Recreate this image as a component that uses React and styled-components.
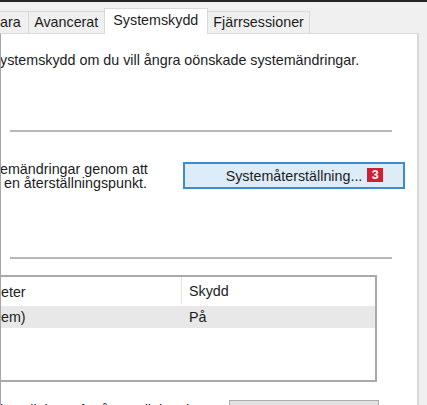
import React from "react";
import styled, { createGlobalStyle } from "styled-components";

const GlobalStyle = createGlobalStyle`
  html, body {
    margin: 0;
    padding: 0;
    background: #f0f0f0;
    overflow: hidden;
  }
  body {
    font-family: "Liberation Sans", Arial, sans-serif;
    font-size: 14.3px;
    color: #1c1c1c;
  }
`;

const tabs = [
  { label: "ara" },
  { label: "Avancerat" },
  { label: "Systemskydd", active: true },
  { label: "Fjärrsessioner" },
];

const App = () => {
  return (
    <>
      <GlobalStyle />
      <Window>
        <TabStrip>
          {tabs.map((t) => (
            <Tab key={t.label} $active={t.active} $first={t.label === "ara"}>
              {t.label}
            </Tab>
          ))}
        </TabStrip>
        <Panel>
          <Intro>ystemskydd om du vill ångra oönskade systemändringar.</Intro>
          <Separator />
          <RestoreRow>
            <RestoreText>
              emändringar genom att
              <br />
              &nbsp;en återställningspunkt.
            </RestoreText>
            <PrimaryButton>
              <ButtonLabel>
                Systemåterställning...
                <Badge>3</Badge>
              </ButtonLabel>
            </PrimaryButton>
          </RestoreRow>
          <Separator $top={67} />
          <DriveList>
            <HeaderRow>
              <Cell $first>eter</Cell>
              <Cell $divider>Skydd</Cell>
            </HeaderRow>
            <DataRow $selected>
              <Cell $first>em)</Cell>
              <Cell>På</Cell>
            </DataRow>
          </DriveList>
          <ConfigRow>
            <ConfigText>inställningar för återställning, hantera</ConfigText>
            <SecondaryButton>Konfigurera...</SecondaryButton>
          </ConfigRow>
        </Panel>
      </Window>
    </>
  );
};

export default App;

// Fönster och flikar

const Window = styled.div`
  width: 427px;
  height: 405px;
  overflow: hidden;
  background: #f0f0f0;
  border-top: 2px solid #262626;
  box-sizing: border-box;
  display: flex;
  flex-direction: column;
`;

const TabStrip = styled.div`
  display: flex;
  align-items: flex-end;
  height: 31px;
  flex-shrink: 0;
`;

const Tab = styled.div`
  position: relative;
  box-sizing: border-box;
  height: ${(p) => (p.$active ? "26px" : "22px")};
  margin-bottom: ${(p) => (p.$active ? "-1px" : "0")};
  padding: ${(p) =>
    p.$first ? "0 7px 0 0" : p.$active ? "0 8.5px" : "0 5.5px"};
  line-height: ${(p) => (p.$active ? "22px" : "21px")};
  background: ${(p) => (p.$active ? "#ffffff" : "#f0f0f0")};
  border: 1px solid #d9d9d9;
  border-bottom: none;
  border-left: ${(p) => (p.$first ? "none" : "1px solid #d9d9d9")};
  margin-left: ${(p) => (p.$first ? "0" : "-1px")};
  z-index: ${(p) => (p.$active ? 2 : 1)};
  white-space: nowrap;
`;

const Panel = styled.div`
  width: 419px;
  flex: 1;
  box-sizing: border-box;
  background: #ffffff;
  border-top: 1px solid #d9d9d9;
  border-right: 2px solid #d9d9d9;
  border-left: 1px solid #a6a6a6;
  display: flex;
  flex-direction: column;
  overflow: hidden;
`;

// Innehåll

const Intro = styled.div`
  margin-top: 18px;
  margin-left: -1px;
  line-height: 16px;
  white-space: nowrap;
`;

const Separator = styled.div`
  height: 2px;
  width: 382px;
  margin-left: 9px;
  margin-top: ${(p) => (p.$top ? `${p.$top}px` : "62px")};
  background: #b8b8b8;
  flex-shrink: 0;
`;

const RestoreRow = styled.div`
  display: flex;
  align-items: flex-start;
  margin-top: 30px;
`;

const RestoreText = styled.div`
  width: 183px;
  margin-left: -1px;
  line-height: 14px;
  white-space: nowrap;
`;

const PrimaryButton = styled.div`
  width: 222px;
  height: 27px;
  box-sizing: border-box;
  display: flex;
  align-items: center;
  justify-content: center;
  background: #dcedf9;
  border: 2px solid #3d8bd3;
`;

const ButtonLabel = styled.span`
  position: relative;
  line-height: 16px;
`;

const Badge = styled.span`
  position: absolute;
  left: calc(100% + 5px);
  top: 0;
  width: 16px;
  height: 14px;
  background: #cf1f33;
  color: #ffffff;
  font-weight: bold;
  font-size: 12.5px;
  line-height: 14px;
  text-align: center;
`;

const DriveList = styled.div`
  width: 378px;
  height: 107px;
  margin-left: -2px;
  margin-top: 16px;
  box-sizing: border-box;
  border: 2px solid #a9a9a9;
  background: #ffffff;
  flex-shrink: 0;
`;

const HeaderRow = styled.div`
  display: flex;
  height: 29px;
  align-items: stretch;
`;

const DataRow = styled.div`
  display: flex;
  height: 22px;
  align-items: center;
  background: ${(p) => (p.$selected ? "#e8e8e8" : "transparent")};
`;

const Cell = styled.div`
  display: flex;
  align-items: center;
  box-sizing: border-box;
  width: ${(p) => (p.$first ? "181px" : "auto")};
  padding-left: ${(p) => (p.$first ? "0" : "7px")};
  margin-left: ${(p) => (p.$first ? "-1px" : "0")};
  border-left: ${(p) => (p.$divider ? "1px solid #e3e3e3" : "1px solid transparent")};
  margin-bottom: ${(p) => (p.$divider ? "2px" : "0")};
  flex: ${(p) => (p.$first ? "none" : "1")};
  white-space: nowrap;
`;

const ConfigRow = styled.div`
  display: flex;
  align-items: flex-start;
  margin-top: 15px;
`;

const ConfigText = styled.div`
  width: 207px;
  margin-right: 22px;
  margin-top: 5px;
  margin-left: -1px;
  overflow: hidden;
  white-space: nowrap;
  line-height: 16px;
`;

const SecondaryButton = styled.div`
  width: 150px;
  height: 24px;
  margin-top: 3px;
  box-sizing: border-box;
  display: flex;
  align-items: center;
  justify-content: center;
  background: #e1e1e1;
  border: 1px solid #adadad;
`;
